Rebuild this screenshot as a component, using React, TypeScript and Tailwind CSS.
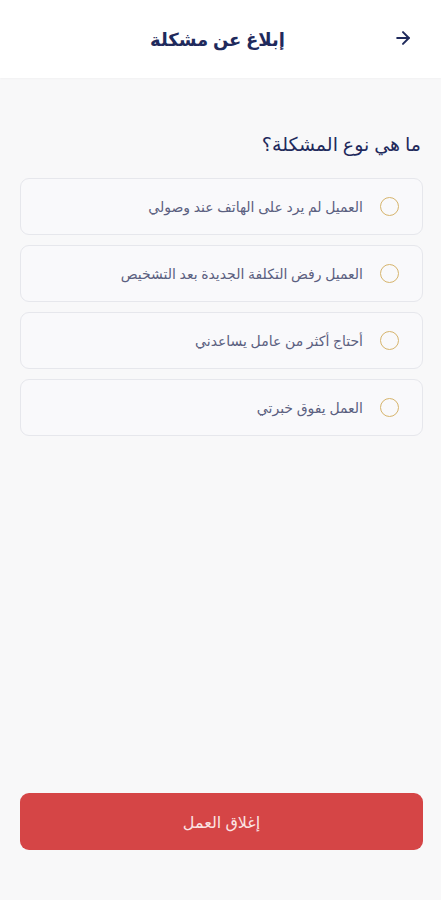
import { ArrowRight } from 'lucide-react';

const reasons = [
  'العميل لم يرد على الهاتف عند وصولي',
  'العميل رفض التكلفة الجديدة بعد التشخيص',
  'أحتاج أكثر من عامل يساعدني',
  'العمل يفوق خبرتي',
];

export default function App() {
  return (
    <div
      dir="rtl"
      className="h-screen flex flex-col bg-[#f8f8f9]"
      style={{ fontFamily: '"Noto Sans", "DejaVu Sans", sans-serif' }}
    >
      {/* Header */}
      <div className="h-[78px] shrink-0 bg-white flex items-center relative shadow-[0_1px_2px_rgba(0,0,0,0.03)]">
        <button className="absolute right-[28px] top-[28px] text-[#1f2a5c]">
          <ArrowRight size={20} strokeWidth={2.4} />
        </button>
        <h1 className="w-full text-center text-[18px] font-bold text-[#1f2a5c] pr-[6px]">إبلاغ عن مشكلة</h1>
      </div>

      {/* Content */}
      <div className="pr-[18px] pl-[20px] pt-[52px]">
        <h2 className="text-[19px] text-[#1f2a5c] mb-[19px] pr-[2px]">ما هي نوع المشكلة؟</h2>
        <div className="flex flex-col gap-[10px]">
          {reasons.map((r) => (
            <label
              key={r}
              className="h-[57px] flex items-center gap-[17px] pr-[23px] pl-4 bg-[#f9f9fb] border border-[#e6e7ec] rounded-[9px]"
            >
              <span className="w-[19px] h-[19px] rounded-full border-[1.5px] border-[#d6b46c] shrink-0" />
              <span className="text-[14px] text-[#5b6080]">{r}</span>
            </label>
          ))}
        </div>
      </div>

      <div className="flex-1" />

      {/* Footer */}
      <div className="pr-[18px] pl-[20px] pb-[50px]">
        <button className="w-full h-[57px] rounded-[9px] bg-[#d54546] text-[#fbe3e3] text-[16px]">
          إغلاق العمل
        </button>
      </div>
    </div>
  );
}
